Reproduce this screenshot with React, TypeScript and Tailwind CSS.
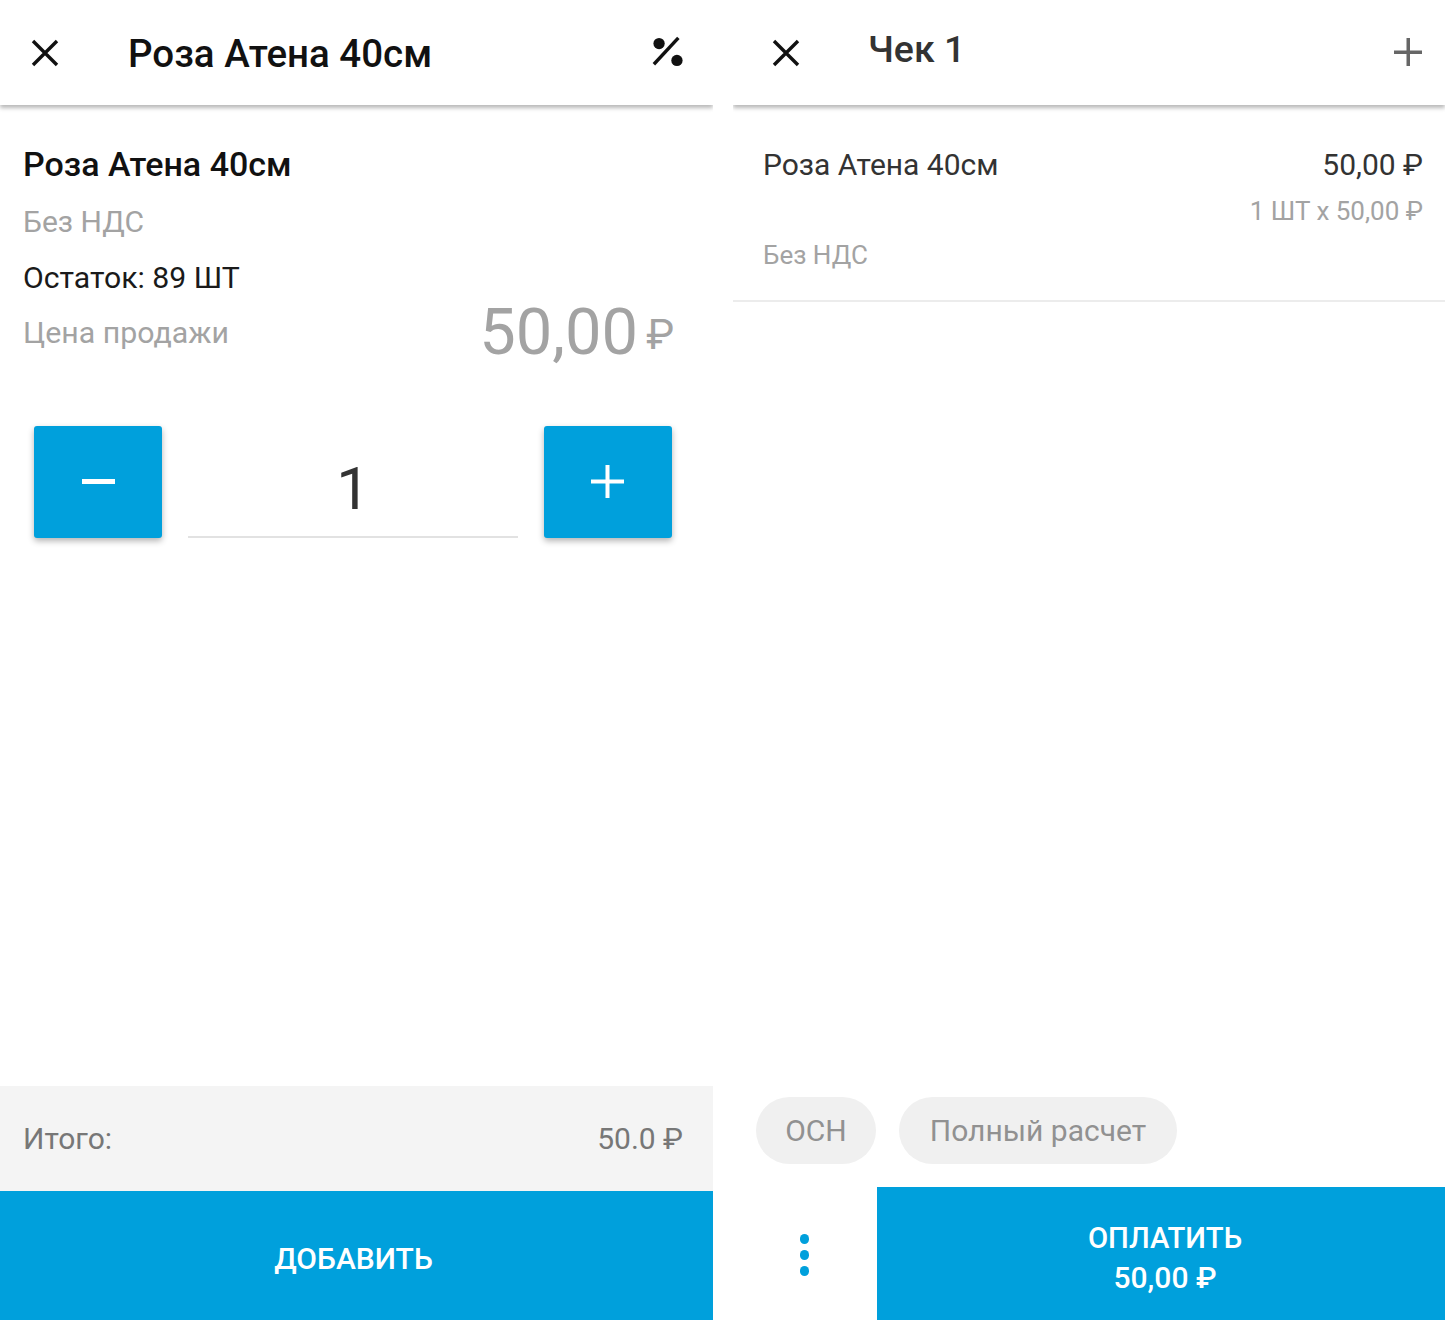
const font = "[font-family:Roboto,'Noto_Sans',sans-serif]";

function CloseIcon() {
  return (
    <svg width="28" height="28" viewBox="0 0 28 28" fill="none" stroke="#111" strokeWidth="3.4">
      <path d="M2 2 L26 26 M26 2 L2 26" />
    </svg>
  );
}

function PercentIcon() {
  return (
    <svg className="-mt-[2px]" width="32" height="32" viewBox="0 0 34 34" fill="#111">
      <circle cx="7.5" cy="8" r="6" />
      <circle cx="26.5" cy="26" r="6" />
      <path d="M2 30 L28 2" stroke="#111" strokeWidth="3.6" fill="none" />
    </svg>
  );
}

function ProductPanel() {
  return (
    <div className="w-[713px] h-[1320px] flex flex-col shrink-0 overflow-hidden">
      <header className="h-[105px] flex items-center justify-between pl-[31px] pr-[29px] bg-white shadow-[0_3px_4px_rgba(0,0,0,0.28)] z-10">
        <div className="flex items-center">
          <CloseIcon />
          <h1 className="ml-[69px] mt-[3px] text-[38.5px] font-medium text-[#111] leading-none">Роза Атена 40см</h1>
        </div>
        <PercentIcon />
      </header>

      <div className="flex-1 flex flex-col">
        <div className="pl-[23px] pr-[39px] pt-[40px]">
          <p className="text-[34px] leading-[38px] font-medium text-[#111]">Роза Атена 40см</p>
          <p className="mt-[20px] text-[30px] leading-[38px] text-[#a3a3a3]">Без НДС</p>
          <p className="mt-[18px] text-[30.2px] leading-[38px] text-[#1a1a1a]">Остаток: 89 ШТ</p>
          <div className="mt-[5px] h-[70px] flex items-center justify-between">
            <span className="text-[30.3px] leading-[48px] text-[#a3a3a3] -mt-[8px]">Цена продажи</span>
            <span className="text-[65px] leading-[70px] text-[#a3a3a3] -mt-[10px]">
              50,00<span className="inline-block ml-[8px] text-[42px] leading-none -translate-y-[5px]">₽</span>
            </span>
          </div>
        </div>

        <div className="mt-[54px] pl-[34px] pr-[41px] flex items-start justify-between">
          <button className="w-[128px] h-[112px] rounded-[3px] bg-[#00a0dc] shadow-[0_3px_6px_rgba(0,0,0,0.3)] flex items-center justify-center pb-[2px]">
            <span className="block w-[33px] h-[5px] bg-white" />
          </button>
          <div className="w-[330px] h-[112px] border-b-2 border-[#e2e2e2] flex items-center justify-center">
            <span className="text-[60px] leading-none text-[#333] mt-[16px]">1</span>
          </div>
          <button className="w-[128px] h-[112px] rounded-[3px] bg-[#00a0dc] shadow-[0_3px_6px_rgba(0,0,0,0.3)] flex items-center justify-center pb-[2px] pr-[2px]">
            <svg width="33" height="33" viewBox="0 0 33 33" fill="#fff">
              <path d="M14.500 0h4v14.500H33v4H18.500V33h-4V18.500H0v-4h14.500z" />
            </svg>
          </button>
        </div>
      </div>

      <div className="h-[105px] bg-[#f4f4f4] flex items-center justify-between pl-[23px] pr-[30px]">
        <span className="text-[30px] text-[#777]">Итого:</span>
        <span className="text-[30px] text-[#777]">50.0 ₽</span>
      </div>
      <button className="h-[129px] bg-[#00a0dc] text-white text-[30px] font-medium pr-[6px] pt-[6px]">ДОБАВИТЬ</button>
    </div>
  );
}

function ReceiptPanel() {
  return (
    <div className="w-[712px] h-[1320px] flex flex-col shrink-0 overflow-hidden">
      <header className="h-[105px] flex items-center justify-between pl-[39px] pr-[23px] bg-white shadow-[0_3px_4px_rgba(0,0,0,0.28)] z-10">
        <div className="flex items-center">
          <CloseIcon />
          <h2 className="ml-[68px] -mt-[6px] text-[37.500px] font-medium text-[#333] leading-none">Чек 1</h2>
        </div>
        <svg className="-mt-[2px]" width="28" height="28" viewBox="0 0 28 28" fill="#666">
          <path d="M12.500 0h3.500v12.500H28v3.500H16V28h-3.500V16H0v-3.500h12.500z" />
        </svg>
      </header>

      <div className="flex-1 flex flex-col">
        <div className="h-[197px] pl-[30px] pr-[22px] pt-[41px] border-b-2 border-[#ececec]">
          <div className="flex justify-between">
            <span className="text-[30px] leading-[38px] text-[#333]">Роза Атена 40см</span>
            <span className="text-[30px] leading-[38px] text-[#333]">50,00 ₽</span>
          </div>
          <p className="mt-[12px] text-right text-[26px] leading-[30px] text-[#a3a3a3]">1 ШТ х 50,00 ₽</p>
          <p className="mt-[14px] text-[26px] leading-[30px] text-[#a3a3a3]">Без НДС</p>
        </div>
        <div className="mt-auto mb-[23px] pl-[23px] flex gap-[23px]">
          <span className="h-[67px] w-[120px] rounded-full bg-[#f0f0f0] flex items-center justify-center text-[30px] text-[#919191]">ОСН</span>
          <span className="h-[67px] w-[278px] rounded-full bg-[#f0f0f0] flex items-center justify-center text-[30px] text-[#919191]">Полный расчет</span>
        </div>
      </div>

      <div className="h-[133px] flex">
        <div className="w-[144px] pr-[2px] pt-[2px] flex flex-col items-center justify-center gap-[6px]">
          <span className="w-[9px] h-[10px] rounded-full bg-[#00a0dc]" />
          <span className="w-[9px] h-[10px] rounded-full bg-[#00a0dc]" />
          <span className="w-[9px] h-[10px] rounded-full bg-[#00a0dc]" />
        </div>
        <button className="flex-1 bg-[#00a0dc] text-white text-[30px] leading-[39px] font-medium pl-[8px] pt-[7px]">
          <span className="text-[29.3px]">ОПЛАТИТЬ</span>
          <br />
          50,00 ₽
        </button>
      </div>
    </div>
  );
}

export default function App() {
  return (
    <div className={`w-[1445px] h-[1320px] bg-white flex justify-between overflow-hidden ${font}`}>
      <ProductPanel />
      <ReceiptPanel />
    </div>
  );
}
